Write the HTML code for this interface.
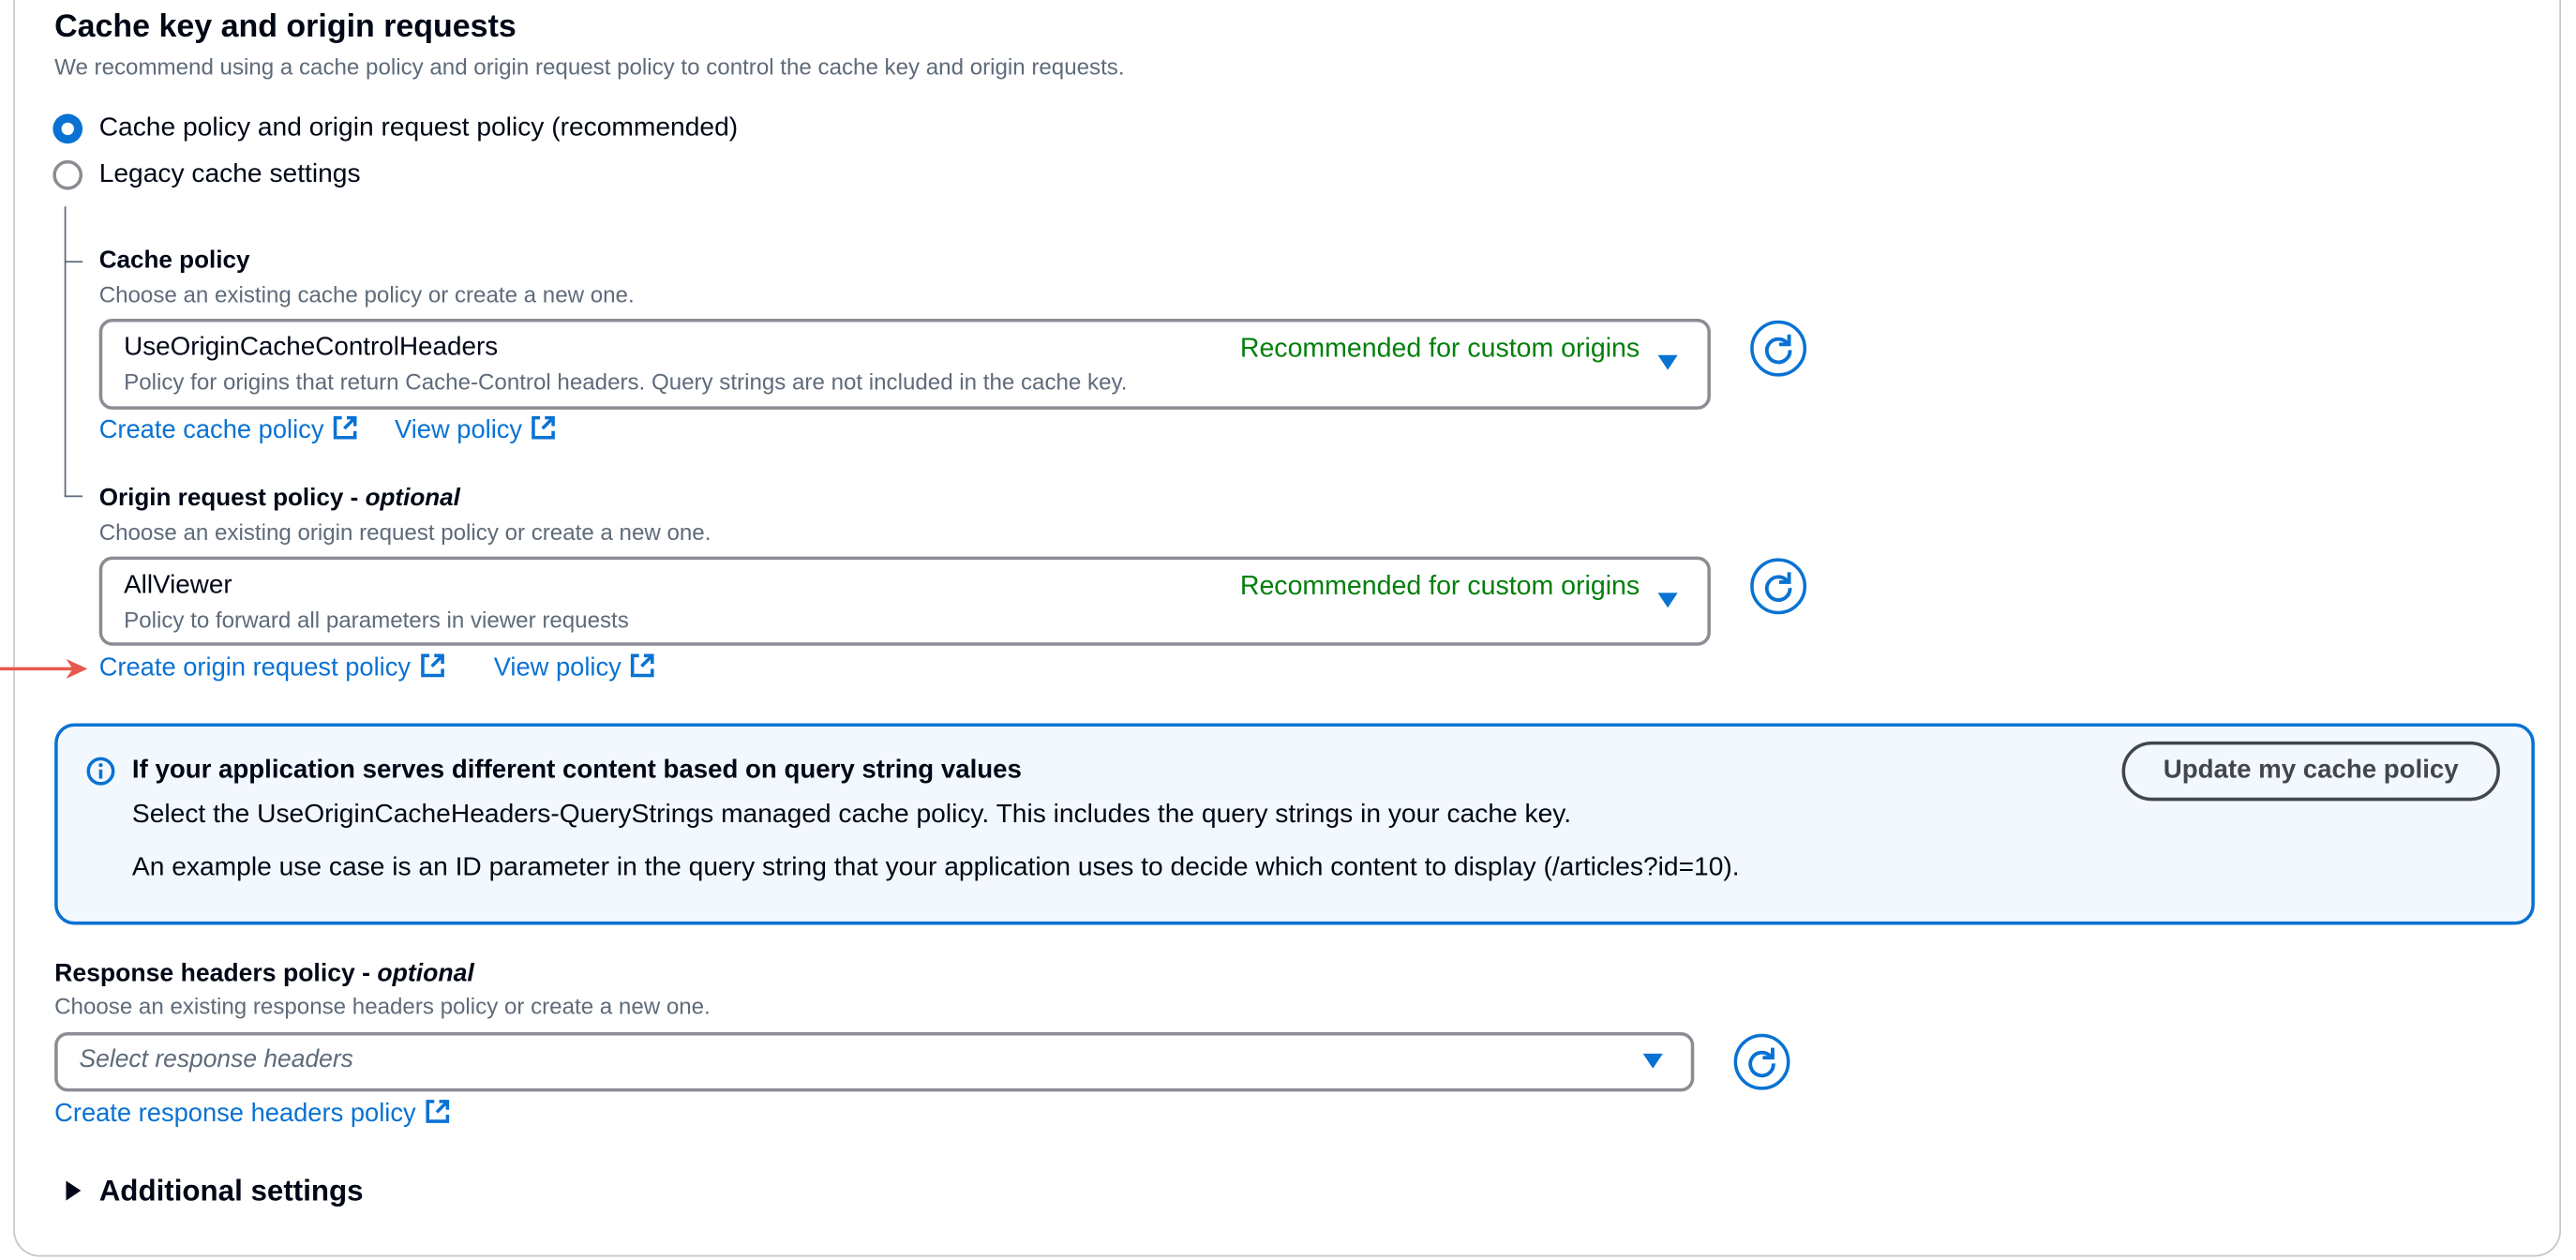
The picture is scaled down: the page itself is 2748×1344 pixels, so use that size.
<!DOCTYPE html>
<html><head><meta charset="utf-8">
<style>
html,body{margin:0;padding:0;background:#fff;overflow:hidden;width:2748px;height:1344px}
#s{position:absolute;left:0;top:0;width:1560px;height:763px;transform:scale(1.7615);transform-origin:0 0;font-family:"Liberation Sans",sans-serif;color:#000716}
.a{position:absolute;white-space:nowrap}
.t14{font-size:15.8px;line-height:20px}
.t12{font-size:13.7px;line-height:16px;color:#5f6b7a}
.b{font-weight:bold}
.lnk{color:#0972d3;font-size:15.5px;line-height:20px}
.lnk svg{position:relative;display:inline-block;vertical-align:-2px;margin-left:5px}
.sel{position:absolute;border:2px solid #8c8c94;border-radius:8px;box-sizing:border-box;background:#fff}
.green{color:#037f0c;font-size:16.2px}
.caret{position:absolute;width:0;height:0;border-left:6px solid transparent;border-right:6px solid transparent;border-top:9px solid #0972d3}
svg{position:absolute;overflow:visible}
</style></head><body><div id="s">
<div style="position:absolute;left:8px;top:-20px;width:1543px;height:781px;border:1px solid #c6c6cd;border-top:none;border-radius:0 0 16px 16px;box-sizing:border-box"></div>

<div class="a b" style="left:33px;top:5px;font-size:19.3px;line-height:24px">Cache key and origin requests</div>
<div class="a t12" style="left:33px;top:33px">We recommend using a cache policy and origin request policy to control the cache key and origin requests.</div>

<svg style="left:32px;top:69px" width="18" height="18"><circle cx="9" cy="9" r="9" fill="#0972d3"/><circle cx="9" cy="9" r="3.8" fill="#fff"/></svg>
<div class="a t14" style="left:60px;top:68px;font-size:16px">Cache policy and origin request policy (recommended)</div>
<svg style="left:32px;top:97px" width="18" height="18"><circle cx="9" cy="9" r="8" fill="none" stroke="#8c8c94" stroke-width="2"/></svg>
<div class="a t14" style="left:60px;top:96px;font-size:16px">Legacy cache settings</div>

<div style="position:absolute;left:39px;top:125px;width:1px;height:176px;background:#5f6b7a"></div>
<div style="position:absolute;left:39px;top:158px;width:11px;height:1px;background:#5f6b7a"></div>
<div style="position:absolute;left:39px;top:300px;width:11px;height:1px;background:#5f6b7a"></div>

<div class="a t14 b" style="left:60px;top:148px;font-size:14.8px">Cache policy</div>
<div class="a t12" style="left:60px;top:171px">Choose an existing cache policy or create a new one.</div>
<div class="sel" style="left:60px;top:193px;width:976px;height:55px"></div>
<div class="a t14" style="left:75px;top:201px">UseOriginCacheControlHeaders</div>
<div class="a t12" style="left:75px;top:224px">Policy for origins that return Cache-Control headers. Query strings are not included in the cache key.</div>
<div class="a t14 green" style="right:567px;top:201px">Recommended for custom origins</div>
<div class="caret" style="left:1004px;top:215px"></div>
<svg style="left:1060px;top:194px" width="34" height="34" viewBox="0 0 34 34"><circle cx="17" cy="17" r="16" fill="none" stroke="#0972d3" stroke-width="2"/><path d="M22.5 14 A7 7 0 1 0 24 18" fill="none" stroke="#0972d3" stroke-width="2.2"/><path d="M23.5 8.5 V14.5 H17.5" fill="none" stroke="#0972d3" stroke-width="2.2"/></svg>
<div class="a lnk" style="left:60px;top:251px">Create cache policy<svg width="16" height="16" viewBox="0 0 16 16"><path d="M6 2H2V14H14V10" fill="none" stroke="#0972d3" stroke-width="2"/><path d="M9 2H14V7M14 2L7.5 8.5" fill="none" stroke="#0972d3" stroke-width="2"/></svg></div>
<div class="a lnk" style="left:239px;top:251px">View policy<svg width="16" height="16" viewBox="0 0 16 16"><path d="M6 2H2V14H14V10" fill="none" stroke="#0972d3" stroke-width="2"/><path d="M9 2H14V7M14 2L7.5 8.5" fill="none" stroke="#0972d3" stroke-width="2"/></svg></div>

<div class="a t14 b" style="left:60px;top:292px;font-size:14.8px">Origin request policy - <i>optional</i></div>
<div class="a t12" style="left:60px;top:315px">Choose an existing origin request policy or create a new one.</div>
<div class="sel" style="left:60px;top:337px;width:976px;height:54px"></div>
<div class="a t14" style="left:75px;top:345px">AllViewer</div>
<div class="a t12" style="left:75px;top:368px">Policy to forward all parameters in viewer requests</div>
<div class="a t14 green" style="right:567px;top:345px">Recommended for custom origins</div>
<div class="caret" style="left:1004px;top:359px"></div>
<svg style="left:1060px;top:338px" width="34" height="34" viewBox="0 0 34 34"><circle cx="17" cy="17" r="16" fill="none" stroke="#0972d3" stroke-width="2"/><path d="M22.5 14 A7 7 0 1 0 24 18" fill="none" stroke="#0972d3" stroke-width="2.2"/><path d="M23.5 8.5 V14.5 H17.5" fill="none" stroke="#0972d3" stroke-width="2.2"/></svg>
<div class="a lnk" style="left:60px;top:395px">Create origin request policy<svg width="16" height="16" viewBox="0 0 16 16"><path d="M6 2H2V14H14V10" fill="none" stroke="#0972d3" stroke-width="2"/><path d="M9 2H14V7M14 2L7.5 8.5" fill="none" stroke="#0972d3" stroke-width="2"/></svg></div>
<div class="a lnk" style="left:299px;top:395px">View policy<svg width="16" height="16" viewBox="0 0 16 16"><path d="M6 2H2V14H14V10" fill="none" stroke="#0972d3" stroke-width="2"/><path d="M9 2H14V7M14 2L7.5 8.5" fill="none" stroke="#0972d3" stroke-width="2"/></svg></div>
<svg style="left:0;top:398px" width="56" height="14"><path d="M0 7H48" stroke="#e8584c" stroke-width="2"/><path d="M40 1L53 7L40 13L44 7Z" fill="#e8584c"/></svg>

<div style="position:absolute;left:33px;top:438px;width:1502px;height:122px;border:2px solid #0972d3;border-radius:12px;background:#f2f8fd;box-sizing:border-box"></div>
<svg style="left:52px;top:458px" width="18" height="18" viewBox="0 0 18 18"><circle cx="9" cy="9" r="7.5" fill="none" stroke="#0972d3" stroke-width="2"/><path d="M9 8V13.5" stroke="#0972d3" stroke-width="2"/><circle cx="9" cy="5.3" r="1.2" fill="#0972d3"/></svg>
<div class="a t14 b" style="left:80px;top:457px;font-size:15.7px">If your application serves different content based on query string values</div>
<div class="a t14" style="left:80px;top:484px;font-size:16px">Select the UseOriginCacheHeaders-QueryStrings managed cache policy. This includes the query strings in your cache key.</div>
<div class="a t14" style="left:80px;top:516px;font-size:16px">An example use case is an ID parameter in the query string that your application uses to decide which content to display (/articles?id=10).</div>
<div style="position:absolute;left:1285px;top:449px;width:229px;height:36px;border:2px solid #424650;border-radius:20px;box-sizing:border-box;color:#424650;font-weight:bold;font-size:15.7px;line-height:32px;text-align:center">Update my cache policy</div>

<div class="a t14 b" style="left:33px;top:580px;font-size:15.1px">Response headers policy - <i>optional</i></div>
<div class="a t12" style="left:33px;top:602px">Choose an existing response headers policy or create a new one.</div>
<div class="sel" style="left:33px;top:625px;width:993px;height:36px"></div>
<div class="a t14" style="left:48px;top:632px;color:#5f6b7a;font-style:italic;font-size:15px">Select response headers</div>
<div class="caret" style="left:995px;top:638px"></div>
<svg style="left:1050px;top:626px" width="34" height="34" viewBox="0 0 34 34"><circle cx="17" cy="17" r="16" fill="none" stroke="#0972d3" stroke-width="2"/><path d="M22.5 14 A7 7 0 1 0 24 18" fill="none" stroke="#0972d3" stroke-width="2.2"/><path d="M23.5 8.5 V14.5 H17.5" fill="none" stroke="#0972d3" stroke-width="2.2"/></svg>
<div class="a lnk" style="left:33px;top:665px">Create response headers policy<svg width="16" height="16" viewBox="0 0 16 16"><path d="M6 2H2V14H14V10" fill="none" stroke="#0972d3" stroke-width="2"/><path d="M9 2H14V7M14 2L7.5 8.5" fill="none" stroke="#0972d3" stroke-width="2"/></svg></div>

<svg style="left:40px;top:715px" width="10" height="12"><path d="M0 0L9 6L0 12Z" fill="#000716"/></svg>
<div class="a b" style="left:60px;top:710px;font-size:17.8px;line-height:22px">Additional settings</div>
</div></body></html>
